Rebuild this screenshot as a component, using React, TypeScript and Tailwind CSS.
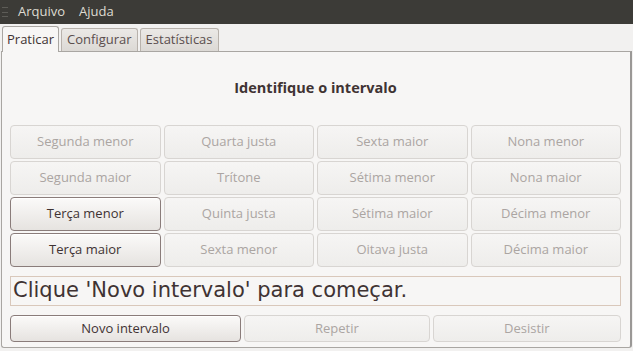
import React from "react";

const grid: [string, boolean][] = [
  ["Segunda menor", false],
  ["Quarta justa", false],
  ["Sexta maior", false],
  ["Nona menor", false],
  ["Segunda maior", false],
  ["Trítone", false],
  ["Sétima menor", false],
  ["Nona maior", false],
  ["Terça menor", true],
  ["Quinta justa", false],
  ["Sétima maior", false],
  ["Décima menor", false],
  ["Terça maior", true],
  ["Sexta menor", false],
  ["Oitava justa", false],
  ["Décima maior", false],
];

function Btn({ label, enabled, className = "" }: { label: string; enabled: boolean; className?: string }) {
  return (
    <button
      className={
        "rounded-[4px] border text-[13px] " +
        (enabled
          ? "border-[#8a7c7a] bg-gradient-to-b from-[#fbfaf9] to-[#e6e3e0] text-[#3f3333] shadow-[inset_0_1px_0_#ffffff]"
          : "border-[#d8d5d2] bg-gradient-to-b from-[#f6f5f4] to-[#eeedeb] text-[#aba5a2]") +
        " " +
        className
      }
    >
      {label}
    </button>
  );
}

export default function App() {
  return (
    <div
      className="w-[633px] h-[351px] bg-[#f2f1f0] flex flex-col overflow-hidden"
      style={{ fontFamily: '"Open Sans", "DejaVu Sans", sans-serif' }}
    >
      {/* menu */}
      <div className="h-[24px] bg-[#3c3b37] flex items-center text-[13px] text-[#dfdbd2]">
        <div className="w-[6px] h-[10px] ml-[2px] flex flex-col justify-between">
          <div className="h-px bg-[#5d5c57]" />
          <div className="h-px bg-[#5d5c57]" />
          <div className="h-px bg-[#5d5c57]" />
        </div>
        <span className="ml-[10px]">Arquivo</span>
        <span className="ml-[14px]">Ajuda</span>
      </div>

      {/* tabs */}
      <div className="flex items-end h-[27px] pl-[2px] gap-[2px] text-[13px]">
        <div className="h-[26px] px-[4px] flex items-center bg-[#f7f6f5] border border-b-0 border-[#a9a6a2] rounded-t-[3px] text-[#3f3333] relative z-10 -mb-px">
          Praticar
        </div>
        <div className="h-[23px] px-[5px] flex items-center bg-gradient-to-b from-[#ebe9e6] to-[#dcd9d5] border border-b-0 border-[#b8b2ac] rounded-t-[3px] text-[#5a4e4e]">
          Configurar
        </div>
        <div className="h-[23px] px-[5px] flex items-center bg-gradient-to-b from-[#ebe9e6] to-[#dcd9d5] border border-b-0 border-[#b8b2ac] rounded-t-[3px] text-[#5a4e4e]">
          Estatísticas
        </div>
      </div>

      {/* panel */}
      <div className="h-[297px] mx-[1px] bg-[#f7f6f5] border border-[#a9a6a2] border-r-2 border-r-[#9a9896] rounded-b-[3px] flex flex-col pl-[8px] pr-[9px]">
        <div className="h-[73px] flex items-center justify-center pb-[1px] text-[14.5px] font-bold text-[#3f3333]">
          Identifique o intervalo
        </div>
        <div className="grid grid-cols-4 gap-x-[3px] gap-y-[2px]">
          {grid.map(([l, e]) => (
            <Btn key={l} label={l} enabled={e} className="h-[34px]" />
          ))}
        </div>
        <div
          className="mt-[9px] h-[30px] border border-[#d9c8bb] bg-[#f7f6f5] flex items-center px-[2px] text-[21px] text-[#3f3333]"
          style={{ fontFamily: '"DejaVu Sans", sans-serif' }}
        >
          Clique 'Novo intervalo' para começar.
        </div>
        <div className="mt-[9px] flex gap-[3px]">
          <Btn label="Novo intervalo" enabled className="h-[27px] w-[232px]" />
          <Btn label="Repetir" enabled={false} className="h-[27px] w-[186px]" />
          <Btn label="Desistir" enabled={false} className="h-[27px] w-[189px]" />
        </div>
      </div>
    </div>
  );
}
